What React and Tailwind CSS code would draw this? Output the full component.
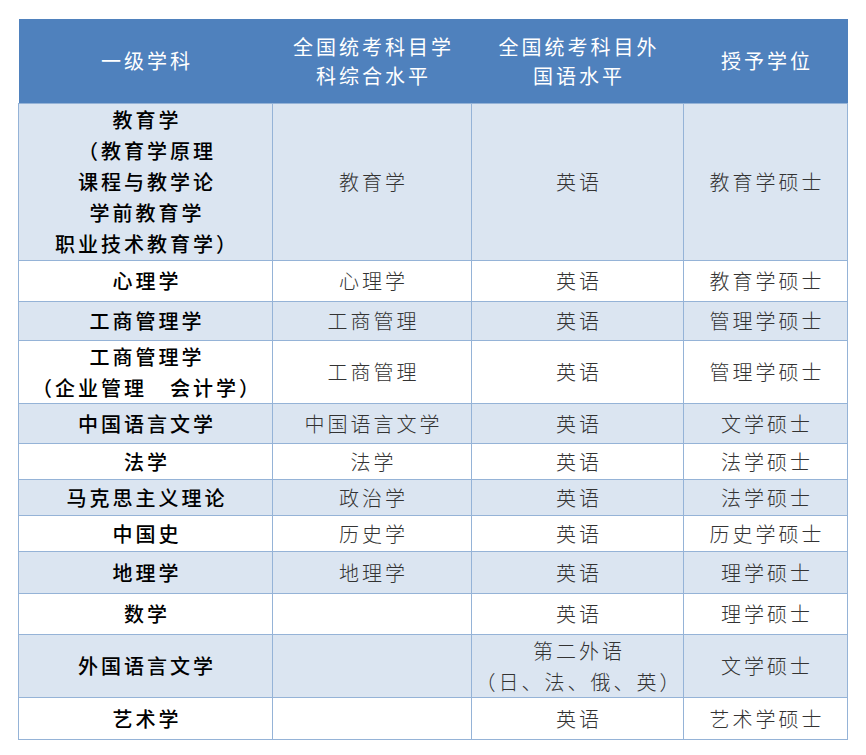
const rows = [
  { h: 'h-[157px]', bg: 'bg-[#dbe5f1]', name: ['教育学', '（教育学原理', '课程与教学论', '学前教育学', '职业技术教育学）'], exam: ['教育学'], lang: ['英语'], degree: '教育学硕士' },
  { h: 'h-[41px]', bg: 'bg-white', name: ['心理学'], exam: ['心理学'], lang: ['英语'], degree: '教育学硕士' },
  { h: 'h-[39px]', bg: 'bg-[#dbe5f1]', name: ['工商管理学'], exam: ['工商管理'], lang: ['英语'], degree: '管理学硕士' },
  { h: 'h-[63px]', bg: 'bg-white', name: ['工商管理学', '（企业管理\u3000会计学）'], exam: ['工商管理'], lang: ['英语'], degree: '管理学硕士' },
  { h: 'h-[40px]', bg: 'bg-[#dbe5f1]', name: ['中国语言文学'], exam: ['中国语言文学'], lang: ['英语'], degree: '文学硕士' },
  { h: 'h-[36px]', bg: 'bg-white', name: ['法学'], exam: ['法学'], lang: ['英语'], degree: '法学硕士' },
  { h: 'h-[36px]', bg: 'bg-[#dbe5f1]', name: ['马克思主义理论'], exam: ['政治学'], lang: ['英语'], degree: '法学硕士' },
  { h: 'h-[36px]', bg: 'bg-white', name: ['中国史'], exam: ['历史学'], lang: ['英语'], degree: '历史学硕士' },
  { h: 'h-[42px]', bg: 'bg-[#dbe5f1]', name: ['地理学'], exam: ['地理学'], lang: ['英语'], degree: '理学硕士' },
  { h: 'h-[41px]', bg: 'bg-white', name: ['数学'], exam: [], lang: ['英语'], degree: '理学硕士' },
  { h: 'h-[63px]', bg: 'bg-[#dbe5f1]', name: ['外国语言文学'], exam: [], lang: ['第二外语', '（日、法、俄、英）'], degree: '文学硕士' },
  { h: 'h-[42px]', bg: 'bg-white', name: ['艺术学'], exam: [], lang: ['英语'], degree: '艺术学硕士' },
];

function Lines({ items }) {
  return items.map((t, i) => (
    <div key={i} className="whitespace-nowrap">{t}</div>
  ));
}

export default function App() {
  return (
    <div className="min-h-screen bg-white pt-[19px] pl-[18px]" style={{ fontFamily: '"Noto Sans CJK SC", "Noto Sans", sans-serif' }}>
      <table className="table-fixed border-collapse w-[829px] text-[20px] tracking-[3px]">
        <colgroup>
          <col className="w-[254px]" />
          <col className="w-[199px]" />
          <col className="w-[212px]" />
          <col className="w-[164px]" />
        </colgroup>
        <thead>
          <tr className="h-[84px] bg-[#4f81bd] text-white leading-[29px]">
            <th className="font-normal text-center pl-[3px]">一级学科</th>
            <th className="font-normal text-center pl-[3px]">全国统考科目学<br />科综合水平</th>
            <th className="font-normal text-center pl-[3px]">全国统考科目外<br />国语水平</th>
            <th className="font-normal text-center pl-[3px]">授予学位</th>
          </tr>
        </thead>
        <tbody className="leading-[31px]">
          {rows.map((r, i) => (
            <tr key={i} className={`${r.h} ${r.bg}`}>
              <td className="border border-[#95b3d7] text-center align-middle p-0 pl-[3px] font-medium text-black">
                <Lines items={r.name} />
              </td>
              <td className="border border-[#95b3d7] text-center align-middle p-0 pl-[3px] font-light text-[#333333]">
                <Lines items={r.exam} />
              </td>
              <td className="border border-[#95b3d7] text-center align-middle p-0 pl-[3px] font-light text-[#333333]">
                <Lines items={r.lang} />
              </td>
              <td className="border border-[#95b3d7] text-center align-middle p-0 pl-[3px] font-light text-[#333333]">
                {r.degree}
              </td>
            </tr>
          ))}
        </tbody>
      </table>
    </div>
  );
}
